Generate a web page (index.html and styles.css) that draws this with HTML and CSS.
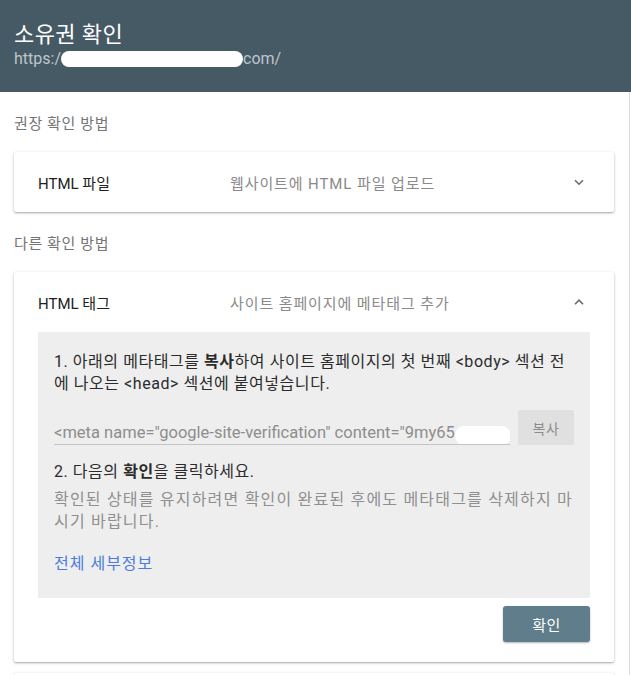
FILE: index.html
```html
<!DOCTYPE html>
<html lang="ko">
<head>
<meta charset="utf-8">
<title>소유권 확인</title>
<link rel="stylesheet" href="styles.css">
</head>
<body>
<header class="dlg-header">
  <h1 class="dlg-title">소유권 확인</h1>
  <div class="dlg-url">https:/<span class="redact redact-url"></span>com/</div>
</header>
<div class="dlg-body">
  <main class="dlg-content">
    <div class="section-label first">권장 확인 방법</div>
    <section class="card">
      <div class="card-head">
        <span class="method-name">HTML 파일</span>
        <span class="method-desc">웹사이트에 HTML 파일 업로드</span>
        <svg class="chev" width="14" height="14" viewBox="0 0 14 14"><path d="M3 5.2 L7 9.2 L11 5.2" fill="none" stroke="#6b6b6b" stroke-width="1.6"/></svg>
      </div>
    </section>

    <div class="section-label">다른 확인 방법</div>
    <section class="card">
      <div class="card-head">
        <span class="method-name">HTML 태그</span>
        <span class="method-desc">사이트 홈페이지에 메타태그 추가</span>
        <svg class="chev" width="14" height="14" viewBox="0 0 14 14"><path d="M3 9.2 L7 5.2 L11 9.2" fill="none" stroke="#6b6b6b" stroke-width="1.6"/></svg>
      </div>
      <div class="panel">
        <p class="step">1. 아래의 메타태그를 <b>복사</b>하여 사이트 홈페이지의 첫 번째 &lt;body&gt; 섹션 전에 나오는 &lt;head&gt; 섹션에 붙여넣습니다.</p>
        <div class="copy-row">
          <div class="meta-field">
            <span class="meta-text">&lt;meta name="google-site-verification" content="9my65</span>
            <span class="redact redact-meta"></span>
          </div>
          <button class="btn-copy" type="button">복사</button>
        </div>
        <p class="step step2">2. 다음의 <b>확인</b>을 클릭하세요.</p>
        <p class="note">확인된 상태를 유지하려면 확인이 완료된 후에도 메타태그를 삭제하지 마시기 바랍니다.</p>
        <a class="more" href="#">전체 세부정보</a>
      </div>
      <div class="card-actions">
        <button class="btn-verify" type="button">확인</button>
      </div>
    </section>
    <section class="card card-next"></section>
  </main>
  <div class="scroll-track"></div>
</div>
</body>
</html>
```
FILE: styles.css
```css
html, body {
  margin: 0;
  padding: 0;
  background: #fff;
}
html {
  overflow: hidden;
}
body {
  font-family: Roboto, "Noto Sans CJK KR", sans-serif;
  width: 631px;
  height: 675px;
  overflow: hidden;
}
.dlg-header {
  background: #465a65;
  height: 92px;
  box-sizing: border-box;
  padding: 20px 14px 0;
}
.dlg-title {
  margin: 0;
  color: #fff;
  font-weight: 400;
  font-size: 22px;
  letter-spacing: 0.4px;
  line-height: 29px;
}
.dlg-url {
  color: #bcc6cc;
  font-size: 16px;
  line-height: 20px;
  display: flex;
  align-items: center;
}
.redact {
  display: inline-block;
  background: #fff;
  border-radius: 8px;
}
.redact-url {
  width: 182px;
  height: 16px;
}
.dlg-body {
  display: flex;
}
.dlg-content {
  flex: 1;
  padding: 0 15px 0 14px;
}
.scroll-track {
  width: 2px;
  border-left: 1px solid #dcdcdc;
}
.section-label {
  color: #757575;
  font-size: 15px;
  letter-spacing: 0.6px;
  line-height: 20px;
  padding: 22px 0 18px;
}
.card {
  background: #fff;
  box-shadow: 0 1px 3px rgba(0,0,0,.28), 0 1px 1px rgba(0,0,0,.10);
  border-radius: 2px;
}
.card-head {
  height: 60px;
  display: flex;
  align-items: center;
  padding: 0 24px;
  font-size: 15px;
}
.method-name {
  width: 192px;
  color: #222;
}
.method-desc {
  flex: 1;
  color: #8a8a8a;
  letter-spacing: 0.9px;
}
.chev {
  margin-right: 4px;
}
.panel {
  background: #eeeeee;
  margin: 0 24px;
  padding: 19px 16px 23px;
}
.step {
  margin: 0;
  font-size: 16px;
  letter-spacing: 0.55px;
  line-height: 22px;
  color: #2b2b2b;
}
.step b {
  font-weight: 700;
}
.copy-row {
  display: flex;
  align-items: flex-start;
  margin-top: 15px;
}
.meta-field {
  position: relative;
  width: 456px;
  height: 35px;
  box-sizing: border-box;
  border-bottom: 1px solid #c4c4c4;
  display: flex;
  align-items: flex-end;
  padding-bottom: 1px;
  overflow: hidden;
  white-space: nowrap;
}
.meta-text {
  color: #8d8d8d;
  font-size: 16.5px;
  line-height: 20px;
}
.redact-meta {
  position: absolute;
  left: 401px;
  top: 16px;
  width: 56px;
  height: 19px;
  border-radius: 9px;
}
.btn-copy {
  margin-left: 8px;
  width: 56px;
  height: 35px;
  border: none;
  border-radius: 2px;
  background: #e0e0e0;
  color: #8c8c8c;
  font-family: inherit;
  font-size: 14px;
  letter-spacing: 0.5px;
  padding: 0;
}
.step2 {
  margin-top: 16px;
}
.note {
  margin: 6px 0 0;
  font-size: 16px;
  letter-spacing: 1.2px;
  line-height: 22px;
  color: #8f8f8f;
}
.more {
  display: block;
  margin-top: 20px;
  font-size: 16px;
  letter-spacing: 1px;
  line-height: 22px;
  color: #4a7ce0;
  text-decoration: none;
}
.card-actions {
  display: flex;
  justify-content: flex-end;
  padding: 8px 24px 20px;
}
.btn-verify {
  width: 87px;
  height: 36px;
  border: none;
  border-radius: 3px;
  background: #607d8b;
  color: #fff;
  font-family: inherit;
  font-size: 15px;
  letter-spacing: 0.5px;
  box-shadow: 0 1px 2px rgba(0,0,0,.3);
}
.card-next {
  margin-top: 11px;
  height: 40px;
}
```
